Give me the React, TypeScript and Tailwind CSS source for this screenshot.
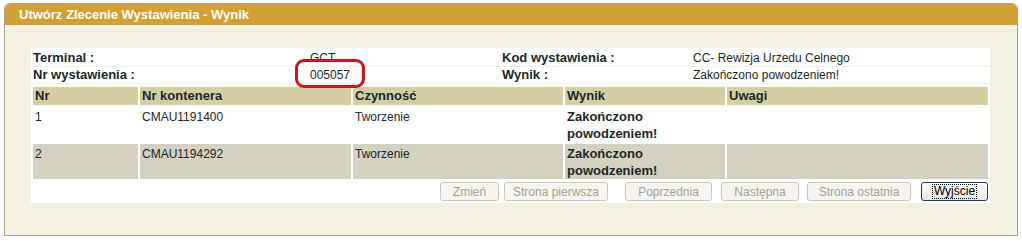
import React from "react";

const font = { fontFamily: '"Liberation Sans", Arial, sans-serif' };

function Btn({ label, w, ml, active }: { label: string; w: number; ml: number; active?: boolean }) {
  return (
    <div
      style={{ width: w, marginLeft: ml }}
      className={
        active
          ? "h-[19px] rounded-[3px] border border-[#1c3a6a] bg-gradient-to-b from-white to-[#e8e8e2] flex items-center justify-center text-[12px] text-black"
          : "h-[19px] rounded-[3px] border border-[#c9c8be] bg-[#f5f4ee] flex items-center justify-center text-[12px] text-[#a3a39c]"
      }
    >
      {active ? (
        <span className="border border-dotted border-black px-[1px] leading-[13px]">{label}</span>
      ) : (
        label
      )}
    </div>
  );
}

export default function App() {
  const rows = [
    { nr: "1", kont: "CMAU1191400", cz: "Tworzenie", bg: "bg-white" },
    { nr: "2", kont: "CMAU1194292", cz: "Tworzenie", bg: "bg-[#d4d1c2]" },
  ];
  return (
    <div style={font} className="w-[1022px] h-[242px] bg-white pt-[3px] pl-[4px] text-[#1b2828]">
      <div className="w-[1014px] h-[233px] border border-[#aaa68c] rounded-t-[6px] bg-[#f3f1e3] flex flex-col">
        <div className="h-[21px] bg-[#d2a035] rounded-t-[5px] pl-[14px] text-white font-bold text-[13px] leading-[21px]">
          Utwórz Zlecenie Wystawienia - Wynik
        </div>
        <div className="pt-[23px] pl-[26px]">
          <div className="relative w-[959px] bg-white">
            {/* info rows */}
            <div className="pt-[2px] grid grid-cols-[279px_192px_191px_297px] leading-[16px]">
              <div className="pl-[2px] font-bold text-[13px] border-b border-[#f1f0e6]">Terminal :</div>
              <div className="text-[12px] border-b border-[#f1f0e6]">GCT</div>
              <div className="font-bold text-[13px] border-b border-[#f1f0e6]">Kod wystawienia :</div>
              <div className="text-[12px] border-b border-[#f1f0e6]">CC- Rewizja Urzedu Celnego</div>
              <div className="pl-[2px] font-bold text-[13px]">Nr wystawienia :</div>
              <div className="text-[12px]">005057</div>
              <div className="font-bold text-[13px]">Wynik :</div>
              <div className="text-[12px]">Zakończono powodzeniem!</div>
            </div>
            <div className="h-[4px] border-t border-[#efeee4]" />
            {/* annotation */}
            <div className="absolute left-[264px] top-[11px] w-[70px] h-[29px] border-[3px] border-[#cc1420] rounded-[9px]" />
            {/* table */}
            <div className="px-[2px] flex flex-col gap-y-[2px]">
              <div className="grid grid-cols-[105px_211px_210px_160px_261px] gap-x-[2px] h-[18px] leading-[18px] font-bold text-[13px]">
                <div className="bg-[#d4cfa3] pl-[2px]">Nr</div>
                <div className="bg-[#d4cfa3] pl-[2px]">Nr kontenera</div>
                <div className="bg-[#d4cfa3] pl-[2px]">Czynność</div>
                <div className="bg-[#d4cfa3] pl-[2px]">Wynik</div>
                <div className="bg-[#d4cfa3] pl-[2px]">Uwagi</div>
              </div>
              {rows.map((r) => (
                <div
                  key={r.nr}
                  className="grid grid-cols-[105px_211px_210px_160px_261px] gap-x-[2px] h-[35px] leading-[16.5px]"
                >
                  <div className={`${r.bg} pl-[2px] pt-[2px] text-[12px]`}>{r.nr}</div>
                  <div className={`${r.bg} pl-[2px] pt-[2px] text-[12px]`}>{r.kont}</div>
                  <div className={`${r.bg} pl-[2px] pt-[2px] text-[12px]`}>{r.cz}</div>
                  <div className={`${r.bg} pl-[2px] pt-[2px] font-bold text-[13px]`}>Zakończono powodzeniem!</div>
                  <div className={`${r.bg}`} />
                </div>
              ))}
            </div>
            {/* footer */}
            <div className="h-[24px] flex items-center pt-[1px]">
              <div className="flex-1" />
              <Btn label="Zmień" w={59} ml={0} />
              <Btn label="Strona pierwsza" w={104} ml={5} />
              <Btn label="Poprzednia" w={87} ml={17} />
              <Btn label="Następna" w={78} ml={9} />
              <Btn label="Strona ostatnia" w={104} ml={8} />
              <Btn label="Wyjście" w={67} ml={10} active />
              <div className="w-[2px]" />
            </div>
          </div>
        </div>
      </div>
    </div>
  );
}
